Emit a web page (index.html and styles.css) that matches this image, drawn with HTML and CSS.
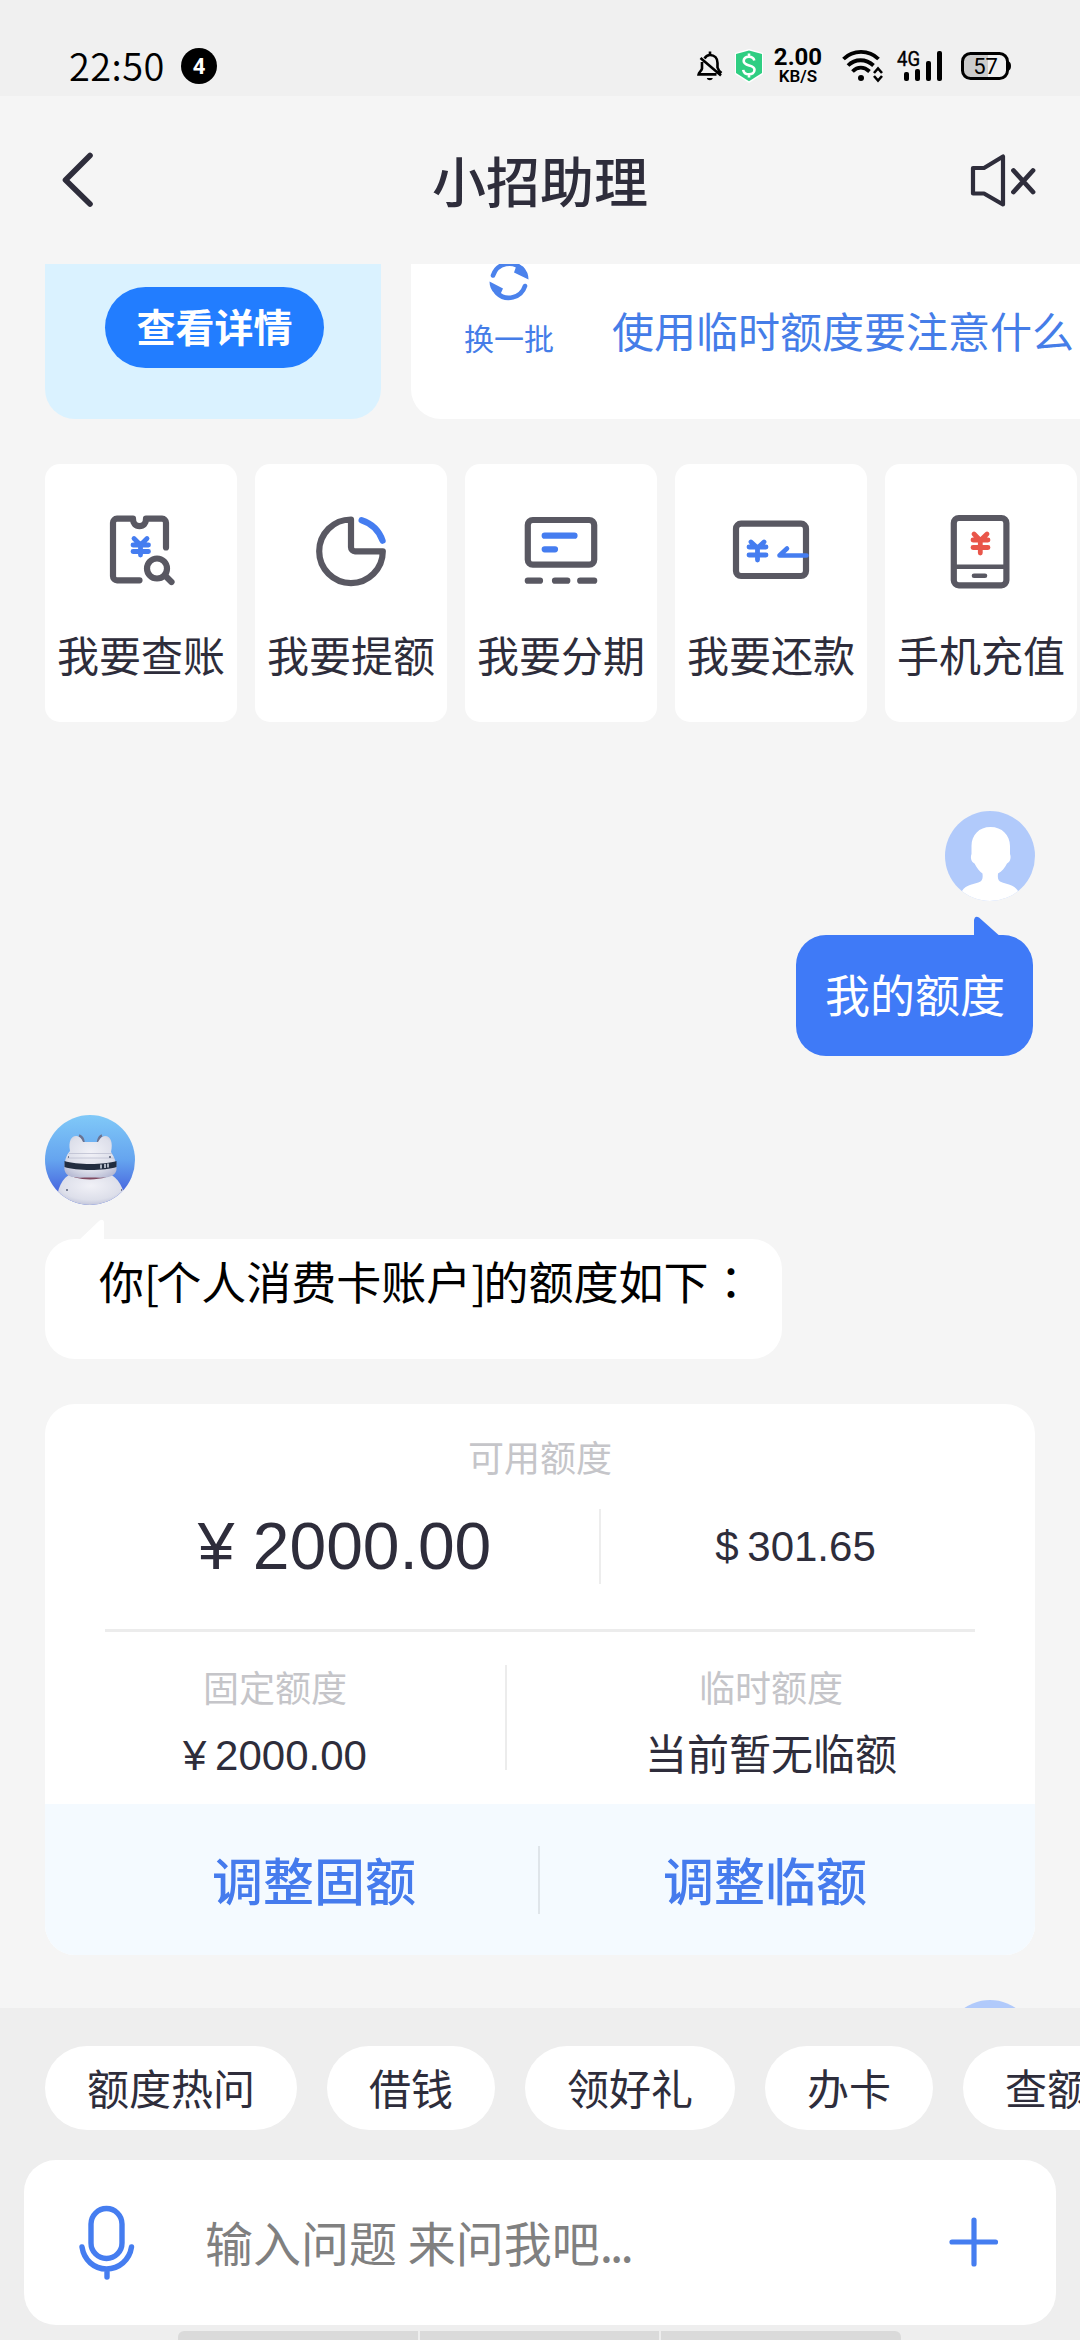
FILE: index.html
```html
<!DOCTYPE html>
<html lang="zh-CN">
<head>
<meta charset="utf-8">
<title>小招助理</title>
<link rel="stylesheet" href="styles.css">
</head>
<body>
<div class="app">
  <div class="status">
    <span class="clock">22:50</span>
    <span class="count">4</span>
    <div class="status-icons">
      <svg class="bell" width="26" height="32" viewBox="0 0 26 32" fill="none" stroke="#000" stroke-width="2.6">
        <path d="M7.5 8.500C9 6 11 5 13 5c4.500 0 7.500 3.300 7.500 8v4.500c.5 2 1.500 3.500 4 5.500M5 12v6.500C4.600 21 2 22 1.600 24.400H19.500M3.500 8 24 25.500"/>
        <path d="M13 1.500V5" /><path d="M9.800 28h6c-.6 3-5.400 3-6 0z" fill="#000" stroke="none"/>
      </svg>
      <svg class="shield" width="30" height="36" viewBox="0 0 30 36">
        <path d="M15 1 29 5V26L15 35 1 26V5z" fill="#fff"/>
        <path d="M15 2.500 28 6V25L15 33.200 2 25V6z" fill="#2fce82"/>
        <path d="M20.300 12.500C19.500 9.500 17.500 8.800 15 8.800c-3 0-5.300 1.500-5.300 4.300 0 5.800 10.800 3 10.800 8.600 0 3-2.500 4.600-5.500 4.600-3.200 0-5.400-1.500-5.800-4.500M15 5.500V9M15 26v3.500" fill="none" stroke="#fff" stroke-width="2.600"/>
      </svg>
      <div class="net"><b>2.00</b><b class="unit">KB/S</b></div>
      <svg class="wifi" width="40" height="32" viewBox="0 0 40 32" fill="none" stroke="#000" stroke-width="3.800">
        <path d="M1.500 9C11-.5 27-.5 36.500 9M6 15.500C13 8.500 24 8.500 31.500 15.500M10.500 21.500c5-5 11.500-5 17 0"/>
        <circle cx="19" cy="28" r="3" fill="#000" stroke="none"/>
        <path d="M32 23l4-4.500 4 4.500M32 26l4 4.500 4-4.500" stroke-width="2.600"/>
      </svg>
      <svg class="signal" width="46" height="32" viewBox="0 0 46 32">
        <text class="gen" x="0" y="15.500" textLength="23" lengthAdjust="spacingAndGlyphs">4G</text>
        <rect x="7" y="22" width="5" height="9" rx="2"/><rect x="18" y="19" width="5" height="12" rx="2"/>
        <rect x="29" y="11" width="5" height="20" rx="2"/><rect x="40" y="1" width="5" height="30" rx="2"/>
      </svg>
      <svg class="battery" width="50" height="30" viewBox="0 0 50 30">
        <path d="M9 3H27V27H9a7 7 0 0 1-7-7V10a7 7 0 0 1 7-7z" fill="#cbcbcb"/>
        <rect x="1.500" y="2.500" width="45" height="25" rx="8" fill="none" stroke="#000" stroke-width="3"/>
        <path d="M47 10c4 1 4 9 0 10z"/>
        <text class="level" x="24.500" y="22.500" text-anchor="middle">57</text>
      </svg>
    </div>
  </div>

  <header class="header">
    <svg class="back" width="40" height="60" viewBox="0 0 40 60" fill="none" stroke="#2e2d3b" stroke-width="5.600" stroke-linecap="round" stroke-linejoin="round"><path d="M33 5.500 8.500 30 33 54"/></svg>
    <h1 class="title">小招助理</h1>
    <svg class="mute" width="68" height="56" viewBox="0 0 68 56" fill="none" stroke="#2e2d3b" stroke-width="4.200" stroke-linecap="round" stroke-linejoin="round">
      <path d="M4 16H15L34 4.500V52.500L15 41.500H4z"/><path d="M44.500 18.500 64 40M64 18.500 44.500 40" stroke-width="4.800"/>
    </svg>
  </header>

  <main class="main">
    <section class="promos">
      <div class="promo"><span class="detail">查看详情</span></div>
      <div class="hot">
        <div class="swap">
          <svg width="40" height="40" viewBox="0 0 40 40">
            <path d="M4 14.500A17 17 0 0 1 33 8.500M36 25A17 17 0 0 1 8 32" fill="none" stroke="#4b82ec" stroke-width="4.600" stroke-linecap="round"/>
            <path d="M39.500 18.500 25 11.500 28 3 34 5.500Q39.500 11 39.500 18.500zM.5 20.500 14 27.500 11.500 33 6 33Q.5 28 .5 20.500z" fill="#4b82ec"/>
          </svg>
          <span>换一批</span>
        </div>
        <span class="question">使用临时额度要注意什么</span>
      </div>
    </section>

    <section class="quick">
      <div class="quick-item">
        <svg class="ic" width="76" height="76" viewBox="0 0 76 76">
          <path d="M36.500 66.300H14a4 4 0 0 1-4-4V8.700a4 4 0 0 1 4-4H30C30 9.500 32.500 12.200 36.500 12.200S43 9.500 43 4.700H59a4 4 0 0 1 4 4V33.500"/>
          <circle cx="54" cy="54.500" r="10"/><path d="M62 61.500 68.500 68"/>
          <path class="blue yen" d="M31 24.500 37.500 31 44 24.500M30 31H45.500M30 37.500H45.500M37.500 31V41"/>
        </svg><span>我要查账</span>
      </div>
      <div class="quick-item">
        <svg class="ic" width="76" height="76" viewBox="0 0 76 76">
          <path d="M38 5.500A31.800 31.800 0 1 0 69.800 37.300H42a4 4 0 0 1-4-4z"/>
          <path class="blue" d="M48.600 6.300A33 33 0 0 1 69.600 26.700"/>
        </svg><span>我要提额</span>
      </div>
      <div class="quick-item">
        <svg class="ic" width="76" height="76" viewBox="0 0 76 76">
          <rect x="4.800" y="6" width="66.400" height="44.700" rx="5"/>
          <path d="M4.800 66.700H17M32 66.700H44.300M57.200 66.700H71.200"/>
          <path class="blue" d="M21.700 21.700H51.500M21.700 35.300H32"/>
        </svg><span>我要分期</span>
      </div>
      <div class="quick-item">
        <svg class="ic" width="76" height="76" viewBox="0 0 76 76">
          <rect x="3" y="9.700" width="70" height="52.300" rx="5"/>
          <path class="blue yen" d="M18 28 24.500 34 31 28M16 33H33M16 41H33M24.500 34V46"/>
          <path class="blue arrow" d="M73.500 41.500H46.500L54 34.500"/>
        </svg><span>我要还款</span>
      </div>
      <div class="quick-item">
        <svg class="ic" width="76" height="76" viewBox="0 0 76 76">
          <rect x="10.800" y="4" width="52.600" height="67.300" rx="5"/>
          <path class="thin" d="M11 52.700H63M31 61.700H42"/>
          <path class="red yen" d="M31 20 37.300 26.500 44 20M30 26H45M30 33.500H45M37.300 26.500V39"/>
        </svg><span>手机充值</span>
      </div>
    </section>

    <section class="msg msg-user">
      <svg class="avatar" width="90" height="90" viewBox="0 0 90 90">
        <clipPath id="disc"><circle cx="45" cy="45" r="45"/></clipPath>
        <g clip-path="url(#disc)"><rect width="90" height="90" fill="#b1cafb"/>
        <path d="M45.500 16C34 16 26.500 24 26.500 35v8c-1.500 4 0 8 3 9.500C32 57 34.500 60.500 37.500 62.500c.5 4 0 6.500-2 8C30 73.500 21 73 17 80V90H73V80C69 73 61 73.500 55 70.500c-2-1.500-2.500-4-2-8C57 60.500 59.500 57 62 52.500c3-1.500 4.500-5.500 3-9.500V35C65 24 57 16 45.500 16z" fill="#fff"/></g>
      </svg>
      <div class="bubble bubble-user">
        <svg class="tail" width="28" height="22" viewBox="0 0 28 22"><path d="M0 22V4Q1-1 5 1.500L28 22z" fill="#3f7af7"/></svg>
        我的额度
      </div>
    </section>

    <section class="msg msg-bot">
      <svg class="avatar" width="90" height="90" viewBox="0 0 90 90">
        <defs>
          <linearGradient id="sky" x1="0" y1="0" x2="0" y2="1"><stop offset="0" stop-color="#80c9f8"/><stop offset=".5" stop-color="#65a4ef"/><stop offset=".85" stop-color="#4867df"/></linearGradient>
          <radialGradient id="shell" cx=".5" cy=".4" r=".68"><stop offset="0" stop-color="#f1f1f7"/><stop offset=".65" stop-color="#dddfea"/><stop offset="1" stop-color="#b5b9d3"/></radialGradient>
        </defs>
        <g clip-path="url(#disc)"><rect width="90" height="90" fill="url(#sky)"/>
        <path d="M12 90C11 74 17 63 27 58H63C73 63 80 72 80 90z" fill="url(#shell)"/>
        <path d="M34 20.500q4 1.500 4.500 6.500M57 20.500q-3 1-4 6.500" fill="none" stroke="#6b7290" stroke-width="2.500"/>
        <path d="M21 57C27 67 65 67 70 56z" fill="#80495f"/>
        <path d="M25 36C23 25 27 20 32 21q4 1 6 6H53q3-6 7-6c6 0 8 7 6 16 4 6 6 12 5.500 18C69 64.500 57 62.500 45 62.500S22 64.500 19.500 55C19 47 21 40 25 36z" fill="url(#shell)"/>
        <path d="M24 38.500H67M22 43H69" stroke="#bcbfd0" stroke-width=".8"/>
        <path d="M19.500 46C31 50 60 50 71.500 46V52C60 56 31 56 19.500 52z" fill="#222d40"/>
        <path d="M56 49.500v4M60 49v4M63 48.500v4" stroke="#dce2ed" stroke-width="1.500"/>
        <path d="M23 42h1M64 42h2M21 75h2M15 80h1M76 75h1" stroke="#555e76" stroke-width="1.500"/></g>
      </svg>
      <div class="bubble bubble-bot">
        <svg class="tail" width="28" height="22" viewBox="0 0 28 22"><path d="M28 22V3Q27-1 23 2L2 22z" fill="#fff"/></svg>
        你<i>[</i>个人消费卡账户<i>]</i>的额度如下<span class="colon" lang="zh-TW">：</span>
      </div>
    </section>

    <section class="card">
      <div class="label">可用额度</div>
      <div class="avail">
        <div class="big">¥ 2000.00</div>
        <div class="usd">$ 301.65</div>
      </div>
      <div class="limits">
        <div class="limit"><div class="label">固定额度</div><div class="value">¥ 2000.00</div></div>
        <div class="limit"><div class="label">临时额度</div><div class="value">当前暂无临额</div></div>
      </div>
      <div class="actions"><span>调整固额</span><span>调整临额</span></div>
    </section>

    <div class="next-avatar"></div>
  </main>

  <footer class="bottom">
    <div class="chips"><span>额度热问</span><span>借钱</span><span>领好礼</span><span>办卡</span><span>查额度</span></div>
    <div class="input">
      <svg class="mic" width="58" height="76" viewBox="0 0 58 76" fill="none" stroke="#457df0" stroke-width="5.400" stroke-linecap="round">
        <rect x="13" y="3.500" width="31" height="50" rx="15.500"/><path d="M4 42C6 55 16 64 28.500 64S51.500 55 53.500 42M29 64V72"/>
      </svg>
      <span class="placeholder">输入问题 来问我吧<i>...</i></span>
      <svg width="52" height="52" viewBox="0 0 52 52" stroke="#457df0" stroke-width="5.200" stroke-linecap="round"><path d="M27 3V47M5 25H48.500"/></svg>
    </div>
    <div class="homebar"><b></b><b></b><b></b></div>
  </footer>
</div>
</body>
</html>
```
FILE: styles.css
```css
* { box-sizing: border-box; }
body { margin: 0; }
i { font-style: normal; }
svg { display: block; flex: none; }

.app {
  width: 1080px;
  height: 2340px;
  overflow: hidden;
  display: flex;
  flex-direction: column;
  background: #f5f5f5;
  color: #2e2d3b;
  font-family: "Noto Sans CJK SC", sans-serif;
  white-space: nowrap;
}

/* status bar */
.status {
  flex: none;
  height: 96px;
  padding: 36px 69px 0 69px;
  display: flex;
  align-items: center;
  background: #f0f0f0;
  color: #000;
}
.clock { width: 112px; padding-bottom: 3px; font-size: 38px; line-height: 57px; font-weight: 350; letter-spacing: .4px; }
.count {
  width: 36px;
  height: 36px;
  border-radius: 50%;
  background: #000;
  color: #fff;
  font: bold 22px/37px Roboto, sans-serif;
  text-align: center;
}
.status-icons { margin-left: auto; display: flex; align-items: center; }
.shield { margin-left: 11px; }
.net {
  width: 50px;
  margin-left: 9px;
  display: flex;
  flex-direction: column;
  align-items: center;
  font-family: Roboto, sans-serif;
}
.net b { font-size: 24px; line-height: 20px; font-weight: 700; }
.net .unit { font-size: 17px; line-height: 18px; font-weight: 600; }
.wifi { margin-left: 19px; overflow: visible; }
.signal { margin-left: 15px; overflow: visible; }
.battery { margin-left: 18px; }
.gen { font: 20px Roboto, sans-serif; stroke: #000; stroke-width: .4px; }
.level { font: 22px Roboto, sans-serif; }

/* title bar */
.header {
  flex: none;
  height: 168px;
  padding: 0 43px 0 57px;
  display: grid;
  grid-template-columns: 1fr auto 1fr;
  align-items: center;
}
.title { margin: 0; padding-right: 14px; font-size: 54px; line-height: 70px; font-weight: 500; }
.mute { justify-self: end; }

/* scrolling conversation */
.main { flex: none; height: 1744px; overflow: hidden; }
.promos { display: flex; gap: 30px; padding-left: 45px; height: 155px; }
.promo {
  flex: none;
  width: 336px;
  padding: 23px 57px 0 60px;
  border-radius: 0 0 30px 30px;
  background: #daf2ff;
}
.detail {
  display: block;
  height: 81px;
  border-radius: 41px;
  background: #227dff;
  color: #fff;
  font-size: 39px;
  line-height: 77px;
  font-weight: 600;
  text-align: center;
}
.hot {
  flex: none;
  width: 900px;
  padding-left: 53px;
  display: flex;
  border-radius: 0 0 0 30px;
  background: #fff;
  color: #457de8;
}
.swap { width: 90px; display: flex; flex-direction: column; align-items: center; font-size: 30px; line-height: 40px; }
.swap svg { margin: -3px 0 16px; }
.question { margin: 36px 0 0 58px; font-size: 42px; line-height: 60px; }

.quick { display: flex; gap: 18px; padding: 45px 0 0 45px; }
.quick-item {
  flex: none;
  width: 192px;
  height: 258px;
  padding-top: 50px;
  display: flex;
  flex-direction: column;
  align-items: center;
  border-radius: 15px;
  background: #fff;
  font-size: 42px;
  line-height: 60px;
}
.quick-item span { margin-top: 34px; }
.ic { fill: none; stroke: #595862; stroke-width: 6.2; stroke-linecap: round; stroke-linejoin: round; overflow: visible; }
.ic .blue { stroke: #457df0; }
.ic .red { stroke: #e9564a; }
.ic .yen { stroke-width: 4.8; }
.ic .thin, .ic .arrow { stroke-width: 4.6; }

.msg { display: flex; flex-direction: column; }
.msg-user { margin-top: 89px; padding-right: 45px; align-items: flex-end; }
.msg-bot { margin-top: 59px; padding-left: 45px; align-items: flex-start; }
.bubble { position: relative; margin-top: 34px; border-radius: 30px; font-size: 45px; line-height: 60px; }
.bubble-user { width: 237px; height: 121px; margin-right: 2px; padding: 29px 0 0 29px; background: #3f7af7; color: #fff; }
.bubble-bot { width: 737px; height: 120px; padding: 12px 0 0 54px; background: #fff; color: #000; }
.bubble-bot i { letter-spacing: -3px; }
.colon { font-family: "Noto Sans CJK TC", sans-serif; }
.tail { position: absolute; }
.bubble-user .tail { left: 178px; top: -19px; }
.bubble-bot .tail { left: 31px; top: -20px; }

/* credit limit card */
.card {
  width: 990px;
  height: 551px;
  margin: 45px 0 0 45px;
  padding-top: 28px;
  display: flex;
  flex-direction: column;
  border-radius: 30px;
  overflow: hidden;
  background: #fff;
  text-align: center;
}
.label { color: #c5c5c9; font-size: 36px; line-height: 48px; }
.avail {
  height: 75px;
  margin: 29px 45px 45px;
  display: grid;
  grid-template-columns: 511px 1fr;
  line-height: 75px;
  font-family: "Liberation Sans", Arial, sans-serif;
}
.big { font-size: 66px; border-right: 2px solid #ededed; }
.usd { font-size: 42px; word-spacing: -3px; }
.limits {
  margin: 0 60px;
  padding-top: 33px;
  height: 175px;
  border-top: 3px solid #ececec;
  display: grid;
  grid-template-columns: 402px 1fr;
}
.limit { height: 105px; }
.limit:first-child { padding-right: 60px; border-right: 2px solid #ececec; }
.limit:last-child { padding-left: 60px; }
.limit .label { margin-top: -3px; }
.value { margin-top: 16px; font: 42px/60px "Liberation Sans", "Noto Sans CJK SC", sans-serif; word-spacing: -3px; }
.actions {
  height: 151px;
  margin-top: auto;
  padding: 42px 45px 0;
  display: grid;
  grid-template-columns: 1fr 1fr;
  background: #f4faff;
  color: #457bed;
  font-size: 51px;
  line-height: 67px;
  font-weight: 500;
}
.actions span { height: 68px; }
.actions span:first-child { border-right: 2px solid #dfe5ea; }

.next-avatar { width: 90px; height: 90px; margin: 45px 0 0 945px; border-radius: 50%; background: #b1cafb; }

/* bottom panel */
.bottom { flex: 1; padding-top: 38px; display: flex; flex-direction: column; background: #eee; }
.chips { display: flex; gap: 30px; padding-left: 45px; }
.chips span {
  flex: none;
  height: 84px;
  padding: 0 42px;
  border-radius: 42px;
  background: #fff;
  font-size: 42px;
  line-height: 82px;
}
.input {
  height: 165px;
  margin: 30px 24px 0;
  padding: 0 57px 0 54px;
  display: flex;
  align-items: center;
  border-radius: 32px;
  background: #fff;
}
.placeholder { flex: 1; margin-left: 69px; padding-bottom: 4px; color: #808080; font-size: 48px; line-height: 70px; }
.placeholder i { letter-spacing: -3px; }
.homebar { height: 9px; margin: 6px 179px 0 178px; display: flex; gap: 2px; border-radius: 6px 6px 0 0; overflow: hidden; }
.homebar b { flex: 1; background: #dadada; }
```
